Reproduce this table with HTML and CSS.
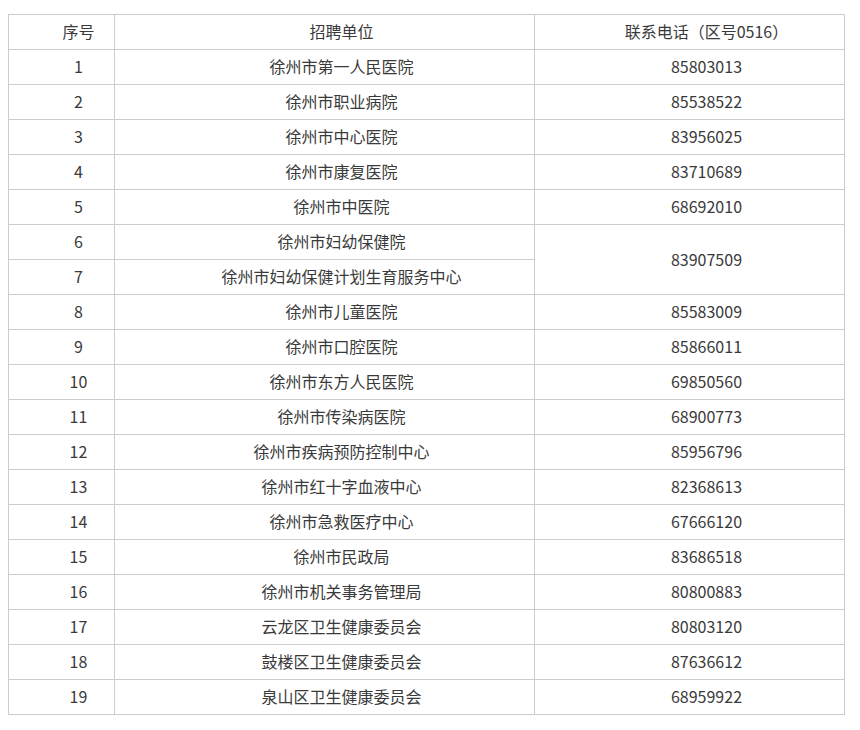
FILE: index.html
```html
<!DOCTYPE html>
<html lang="zh-CN">
<head>
<meta charset="utf-8">
<title>招聘单位联系电话</title>
<link rel="stylesheet" href="styles.css">
</head>
<body>
<table class="tbl">
<colgroup><col class="c1"><col class="c2"><col class="c3"></colgroup>
<tr><td>序号</td><td>招聘单位</td><td>联系电话（区号0516）</td></tr>
<tr><td>1</td><td>徐州市第一人民医院</td><td>85803013</td></tr>
<tr><td>2</td><td>徐州市职业病院</td><td>85538522</td></tr>
<tr><td>3</td><td>徐州市中心医院</td><td>83956025</td></tr>
<tr><td>4</td><td>徐州市康复医院</td><td>83710689</td></tr>
<tr><td>5</td><td>徐州市中医院</td><td>68692010</td></tr>
<tr><td>6</td><td>徐州市妇幼保健院</td><td rowspan="2">83907509</td></tr>
<tr><td>7</td><td>徐州市妇幼保健计划生育服务中心</td></tr>
<tr><td>8</td><td>徐州市儿童医院</td><td>85583009</td></tr>
<tr><td>9</td><td>徐州市口腔医院</td><td>85866011</td></tr>
<tr><td>10</td><td>徐州市东方人民医院</td><td>69850560</td></tr>
<tr><td>11</td><td>徐州市传染病医院</td><td>68900773</td></tr>
<tr><td>12</td><td>徐州市疾病预防控制中心</td><td>85956796</td></tr>
<tr><td>13</td><td>徐州市红十字血液中心</td><td>82368613</td></tr>
<tr><td>14</td><td>徐州市急救医疗中心</td><td>67666120</td></tr>
<tr><td>15</td><td>徐州市民政局</td><td>83686518</td></tr>
<tr><td>16</td><td>徐州市机关事务管理局</td><td>80800883</td></tr>
<tr><td>17</td><td>云龙区卫生健康委员会</td><td>80803120</td></tr>
<tr><td>18</td><td>鼓楼区卫生健康委员会</td><td>87636612</td></tr>
<tr><td>19</td><td>泉山区卫生健康委员会</td><td>68959922</td></tr>
</table>
</body>
</html>
```

FILE: styles.css
```css
html, body {
  background: #ffffff;
}
body {
  margin: 0;
  padding: 14px 8px 0 8px;
  font-family: "Noto Sans CJK SC", "Noto Sans", sans-serif;
  color: #3a3a3a;
}
.tbl {
  border-collapse: collapse;
  table-layout: fixed;
  width: 836px;
}
.c1 { width: 106px; }
.c2 { width: 420px; }
.c3 { width: 310px; }
.tbl td {
  border: 1px solid #cccccc;
  height: 35px;
  padding: 0 0 2px 34px;
  text-align: center;
  vertical-align: middle;
  font-size: 16px;
  line-height: 20px;
  box-sizing: border-box;
}
```
